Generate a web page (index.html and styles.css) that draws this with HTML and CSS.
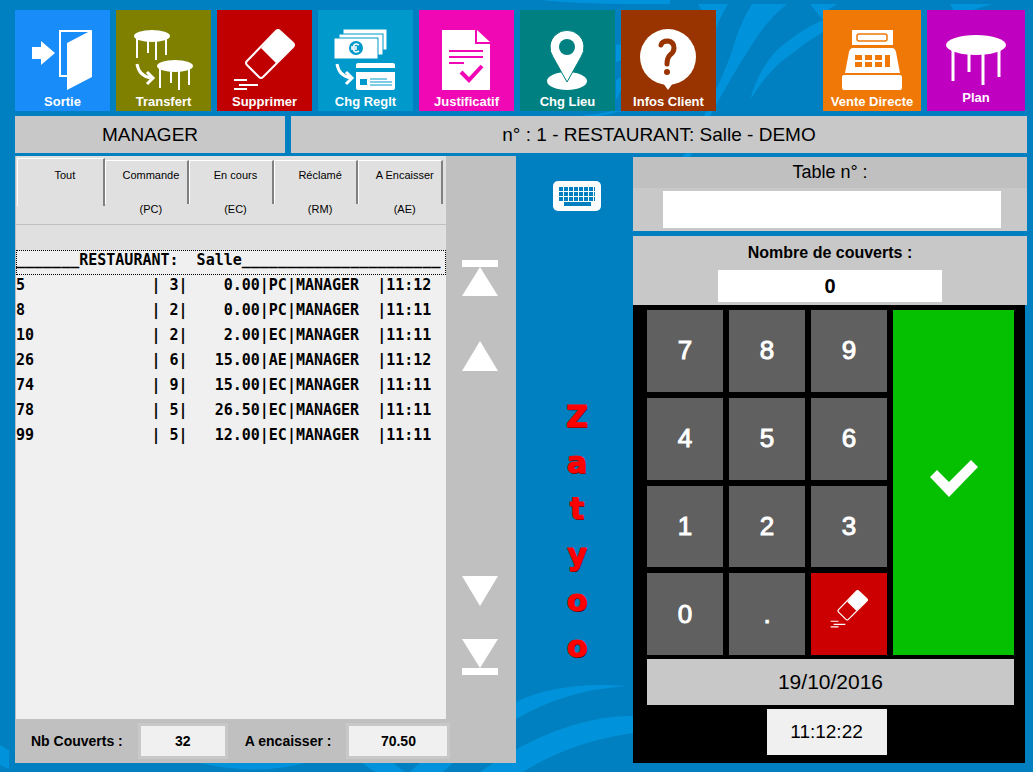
FILE: index.html
```
<!DOCTYPE html>
<html lang="fr">
<head>
    <meta charset="UTF-8">
    <meta name="viewport" content="width=device-width, initial-scale=1.0">
    <title>Zatyoo - Restaurant</title>
    <link rel="stylesheet" href="styles.css">
</head>
<body>

<!-- Background waves -->
<svg class="waves" viewBox="0 0 1033 772" preserveAspectRatio="none" aria-hidden="true">
    <path d="M540 0H670V4H630Q580 4 540 0ZM698 4H728Q718 20 712 40V30Z"/>
    <path d="M752 4H787Q767 20 753 43Q732 75 710 116H704Q716 92 716 90Q730 60 736 38Q742 20 752 4Z"/>
    <path d="M810 4H837L823 13V32Q806 42 790 55Q768 70 750 100Q758 70 777 50Q800 30 823 20Z"/>
    <path d="M950 4H992L960 14H956ZM616 45L621 44V60L616 62ZM616 80L621 77V90L616 100ZM580 116Q600 114 612 111H621L600 116Z"/>
    <path d="M686 153H692L690 157H682ZM0 745L9 750V769L0 765ZM200 763H305Q255 776 200 763ZM362 763H393L405 772H375Z"/>
    <path d="M410 772L420 763H453L443 772ZM480 772Q560 716 633 716V733Q570 742 523 772Z"/>
    <path d="M516 702Q560 681 627 686Q565 690 516 719Z"/>
</svg>

<div class="app">
    <!-- Main toolbar -->
    <nav class="toolbar">
        <button class="tile sortie">
            <svg viewBox="0 0 95 82"><path d="M17 37h9v-6l14 12-14 12v-6h-9zM52 33l25-13v47L52 80z" fill="#fff"/><path d="M52 66h-7V21h31" fill="none" stroke="#fff" stroke-width="2"/></svg>
            <span>Sortie</span>
        </button>
        <button class="tile transfert">
            <svg viewBox="0 0 95 82">
                <g id="table-small"><ellipse cx="36" cy="26" rx="18" ry="6" fill="#fff"/><path d="M21 28v20M32 31v12M40 31v19M50 28v17" stroke="#fff" stroke-width="2"/></g>
                <use href="#table-small" x="23" y="30"/>
                <path d="M21 54q2 12 14 14M31 62l6 6-6 6" fill="none" stroke="#fff" stroke-width="3"/>
            </svg>
            <span>Transfert</span>
        </button>
        <button class="tile supprimer">
            <svg viewBox="0 0 95 82">
                <g id="eraser"><path d="M44 38L59 21q2-2 4 0L76 33q2 2 0 4L59 53z" fill="#fff"/><path d="M59 21q2-2 4 0L76 33q2 2 0 4L46 67q-2 2-4 0L30 55q-2-2 0-4z" fill="none" stroke="#fff" stroke-width="2"/><path d="M17 70h13M22 75h19M17 79h13" stroke="#fff" stroke-width="2"/></g>
            </svg>
            <span>Supprimer</span>
        </button>
        <button class="tile reglt">
            <svg viewBox="0 0 95 82">
                <g fill="#fff" stroke="#0099cc" stroke-width="1"><rect x="25" y="19" width="44" height="21"/><rect x="21" y="24" width="44" height="21"/><rect x="16" y="28" width="44" height="21"/></g>
                <circle cx="38" cy="38" r="7" fill="#0099cc"/>
                <path d="M41 35q-5-3-6 3 1 6 6 3M33 37h6M33 39h6" fill="none" stroke="#fff" stroke-width="1.5"/>
                <path d="M19 54q2 12 14 14M28 62l6 6-6 6" fill="none" stroke="#fff" stroke-width="3"/>
                <path d="M38 58v-3q0-2 2-2h35q2 0 2 2v3zM38 62h39v16q0 2-2 2H40q-2 0-2-2z" fill="#fff"/>
                <path d="M42 69h7v6h-7z" fill="#0099cc"/><path d="M52 69h17M52 72h22M52 75h22" stroke="#0099cc"/>
            </svg>
            <span>Chg Reglt</span>
        </button>
        <button class="tile justificatif">
            <svg viewBox="0 0 95 82"><path d="M23 20h33v14h15v46H23zM58 20l13 12H58z" fill="#fff"/><path d="M30 41h34M30 47h34M30 53h15" stroke="#f008b4" stroke-width="2"/><path d="M42 62l8 8 13-14" fill="none" stroke="#f008b4" stroke-width="4"/></svg>
            <span>Justificatif</span>
        </button>
        <button class="tile lieu">
            <svg viewBox="0 0 95 82"><ellipse cx="47" cy="71" rx="20" ry="9" fill="#fff"/><path d="M47 72L33 47a17 17 0 1 1 28 0z" fill="#fff" stroke="#008080"/><circle cx="47" cy="37" r="8" fill="#008080"/></svg>
            <span>Chg Lieu</span>
        </button>
        <button class="tile infos">
            <svg viewBox="0 0 95 82"><circle cx="47" cy="47" r="28" fill="#fff"/><path d="M42 73h10l-5 7z" fill="#fff"/><path d="M40 35q1-4 7-4 6 1 6 7 0 4-4 7-3 3-3 9" fill="none" stroke="#993300" stroke-width="5" stroke-linecap="round"/><circle cx="46" cy="62" r="3" fill="#993300"/></svg>
            <span>Infos Client</span>
        </button>
        <button class="tile vente">
            <svg viewBox="0 0 98 82">
                <path d="M29 20h41v15H29zM30 38h39q3 0 4 4l4 21H22l4-21q1-4 4-4z" fill="#fff"/><rect x="19" y="65" width="60" height="15" rx="2" fill="#fff"/>
                <rect x="34" y="24" width="30" height="7" rx="2" fill="none" stroke="#f07806" stroke-width="1.5"/>
                <path d="M32 45h7v5h-7zM42 45h7v5h-7zM52 45h7v5h-7zM32 52h7v5h-7zM42 52h7v5h-7zM52 52h7v5h-7zM62 45h5v12h-5z" fill="#f07806"/>
            </svg>
            <span>Vente Directe</span>
        </button>
        <button class="tile plan">
            <svg viewBox="0 0 98 82"><ellipse cx="49" cy="35" rx="30" ry="10" fill="#fff"/><path d="M26 40v31M42 44v18M56 44v31M72 40v27" stroke="#fff" stroke-width="3"/></svg>
            <span>Plan</span>
        </button>
    </nav>

    <header class="titles">
        <div class="title-box">MANAGER</div>
        <div class="title-box">n° : 1 - RESTAURANT: Salle - DEMO</div>
    </header>

    <main class="main">
        <!-- Orders list -->
        <section class="orders">
            <div class="tabs">
                <button class="tab active">Tout</button>
                <button class="tab">Commande<span>(PC)</span></button>
                <button class="tab">En cours<span>(EC)</span></button>
                <button class="tab">Réclamé<span>(RM)</span></button>
                <button class="tab">A Encaisser<span>(AE)</span></button>
            </div>
            <div class="list">
                <table>
                    <colgroup>
                        <col class="num">
                        <col class="guests">
                        <col class="amount">
                        <col class="state">
                        <col class="user">
                        <col>
                    </colgroup>
                    <thead>
                        <tr><th colspan="6">_______RESTAURANT:  Salle______________________</th></tr>
                    </thead>
                    <tbody>
                        <tr><td>5</td><td>| 3|</td><td>0.00</td><td>|PC|</td><td>MANAGER</td><td>|11:12</td></tr>
                        <tr><td>8</td><td>| 2|</td><td>0.00</td><td>|PC|</td><td>MANAGER</td><td>|11:11</td></tr>
                        <tr><td>10</td><td>| 2|</td><td>2.00</td><td>|EC|</td><td>MANAGER</td><td>|11:11</td></tr>
                        <tr><td>26</td><td>| 6|</td><td>15.00</td><td>|AE|</td><td>MANAGER</td><td>|11:12</td></tr>
                        <tr><td>74</td><td>| 9|</td><td>15.00</td><td>|EC|</td><td>MANAGER</td><td>|11:11</td></tr>
                        <tr><td>78</td><td>| 5|</td><td>26.50</td><td>|EC|</td><td>MANAGER</td><td>|11:11</td></tr>
                        <tr><td>99</td><td>| 5|</td><td>12.00</td><td>|EC|</td><td>MANAGER</td><td>|11:11</td></tr>
                    </tbody>
                </table>
            </div>
            <div class="scroll">
                <button aria-label="Début"><svg width="36" height="36"><path d="M0 0h36v7H0zM18 7l18 29H0z" fill="#fff"/></svg></button>
                <button aria-label="Monter"><svg width="36" height="30"><path d="M18 0l18 30H0z" fill="#fff"/></svg></button>
                <button class="down" aria-label="Descendre"><svg width="36" height="30"><path d="M0 0h36L18 30z" fill="#fff"/></svg></button>
                <button aria-label="Fin"><svg width="36" height="36"><path d="M0 0h36L18 29zM0 29h36v7H0z" fill="#fff"/></svg></button>
            </div>
            <div class="totals">
                <label for="covers">Nb Couverts :</label>
                <input id="covers" value="32" readonly>
                <label for="due">A encaisser :</label>
                <input id="due" class="due" value="70.50" readonly>
            </div>
        </section>

        <!-- Keyboard and brand -->
        <aside class="middle">
            <button class="keyboard" aria-label="Clavier">
                <svg width="48" height="30" viewBox="0 0 48 30"><rect width="48" height="30" rx="5" fill="#fff"/><path d="M6 8h36M6 13h36M6 18h36" stroke="#0080c0" stroke-width="4" stroke-dasharray="4 1"/><path d="M11 23h27" stroke="#0080c0" stroke-width="4"/></svg>
            </button>
            <div class="brand"><span>Z</span><span>a</span><span>t</span><span>y</span><span>o</span><span>o</span></div>
        </aside>

        <!-- Table number and keypad -->
        <section class="entry">
            <div class="table-box">
                <label for="tableNo">Table n° :</label>
                <input id="tableNo" type="text">
            </div>
            <div class="guests-box">
                <label for="guests">Nombre de couverts :</label>
                <input id="guests" type="text" value="0">
            </div>
            <div class="pad">
                <div class="keys">
                    <button>7</button>
                    <button>8</button>
                    <button>9</button>
                    <button class="ok" aria-label="Valider"><svg width="48" height="37" viewBox="0 0 48 37"><path d="M0 17l7-7 12 12L41 0l7 7-29 30z" fill="#fff"/></svg></button>
                    <button>4</button>
                    <button>5</button>
                    <button>6</button>
                    <button>1</button>
                    <button>2</button>
                    <button>3</button>
                    <button>0</button>
                    <button>.</button>
                    <button class="clear" aria-label="Effacer"><svg width="38" height="38" viewBox="16 19 62 62"><use href="#eraser"/></svg></button>
                </div>
                <div class="date">19/10/2016</div>
                <div class="time">11:12:22</div>
            </div>
        </section>
    </main>
</div>

</body>
</html>
```
FILE: styles.css
```
* {
    box-sizing: border-box;
}
body {
    margin: 0;
    background-color: #0080c0;
    color: #000;
    font-family: "Liberation Sans", Arial, sans-serif;
}
button {
    margin: 0;
    padding: 0;
    border: none;
    background: none;
    color: inherit;
    font-family: inherit;
    cursor: pointer;
}
input {
    border: none;
    border-radius: 0;
    padding: 0;
    font-family: inherit;
    text-align: center;
}
svg {
    display: block;
}
.waves {
    position: absolute;
    top: 0;
    left: 0;
    width: 100%;
    height: 100%;
    fill: #0093db;
}
.app {
    position: relative;
    display: flex;
    flex-direction: column;
    min-height: 100vh;
    padding: 10px 6px 9px 15px;
}

/* Toolbar */
.toolbar {
    display: flex;
    gap: 6px;
    padding-right: 2px;
}
.tile {
    display: flex;
    flex-direction: column;
    flex: 0 0 95px;
    height: 101px;
    color: #fff;
    font-size: 13px;
    font-weight: bold;
    line-height: 19px;
}
.tile svg {
    flex: none;
    width: 100%;
    height: 82px;
}
.tile span {
    width: 100%;
    text-align: center;
}
.sortie { background-color: #188cf8; }
.transfert { background-color: #808000; }
.supprimer { background-color: #c00000; }
.reglt { background-color: #0099cc; }
.justificatif { background-color: #f008b4; }
.lieu { background-color: #008080; }
.infos { background-color: #993300; }
.vente {
    flex-basis: 98px;
    margin-left: auto;
    background-color: #f07806;
}
.plan {
    flex-basis: 98px;
    background-color: #c000c0;
}
.plan span {
    margin-top: -4px;
}

/* Title bar */
.titles {
    display: grid;
    grid-template-columns: 270fr 736fr;
    gap: 6px;
    margin: 5px 0 3px;
}
.title-box {
    background-color: #c8c8c8;
    font-size: 19px;
    line-height: 37px;
    text-align: center;
}

.main {
    display: grid;
    grid-template-columns: 501fr 117fr 394fr;
    flex: 1;
}

/* Orders */
.orders {
    display: grid;
    grid-template-columns: 1fr 70px;
    grid-template-rows: auto 1fr 44px;
    padding-left: 1px;
    background-color: #c0c0c0;
}
.tabs {
    display: grid;
    grid-template-columns: 88fr repeat(4, 85fr);
    height: 94px;
    padding: 2px 3px 0 1px;
    background: linear-gradient(#c0c0c0, #c0c0c0) 0 68px / 100% 1px no-repeat #e0e0e0;
}
.tab {
    position: relative;
    display: flex;
    flex-direction: column;
    height: 60px;
    padding: 8px 0 0 8px;
    font-size: 11px;
    line-height: 18px;
    text-align: center;
}
.tab span {
    margin-top: 16px;
}
.tab::before {
    content: "";
    position: absolute;
    top: 2px;
    left: 0;
    right: 0;
    height: 43px;
    border: 1px solid #fff;
    border-right: 2px solid #808080;
    border-bottom: none;
}
.tab.active::before {
    top: 0;
    height: 47px;
}
.list {
    overflow: hidden;
    background-color: #f0f0f0;
}
.list table {
    width: 100%;
    border-collapse: collapse;
    table-layout: fixed;
    font-family: "DejaVu Sans Mono", Consolas, monospace;
    font-size: 15px;
    font-weight: bold;
    line-height: 20px;
    white-space: pre;
}
.list th {
    padding: 0;
    outline: 1px dotted #000;
    outline-offset: -1px;
    text-align: left;
}
.list tr {
    height: 25px;
    vertical-align: top;
}
.list td {
    padding: 0;
}
.list td:nth-child(3) {
    text-align: right;
}
.num {
    width: 15ch;
}
.guests,
.state {
    width: 4ch;
}
.amount {
    width: 8ch;
}
.user {
    width: 9ch;
}
.scroll {
    display: flex;
    flex-direction: column;
    align-items: center;
    grid-column: 2;
    grid-row: 1 / 3;
    gap: 45px;
    padding: 104px 2px 44px 0;
}
.scroll .down {
    margin-top: auto;
    margin-bottom: -12px;
}
.totals {
    display: flex;
    align-items: center;
    grid-column: 1 / 3;
    padding-left: 15px;
    font-size: 14px;
    font-weight: bold;
}
.totals input {
    width: 90px;
    height: 36px;
    margin: 0 17px 0 15px;
    border: 3px solid #c8c8c8;
    background-color: #f0f0f0;
    font-size: 14px;
    font-weight: bold;
}
.totals .due {
    width: 104px;
}

/* Keyboard and brand */
.middle {
    display: flex;
    flex-direction: column;
    align-items: center;
    padding: 25px 0 0 5px;
}
.brand {
    display: flex;
    flex-direction: column;
    margin-top: 183px;
    color: #f00;
    font-family: "DejaVu Sans", Verdana, sans-serif;
    font-size: 30px;
    font-weight: bold;
    line-height: 46px;
    text-align: center;
    text-shadow: 1px 1px 0 #300;
    -webkit-text-stroke: 1px #f00;
}

/* Entry */
.entry {
    display: flex;
    flex-direction: column;
    padding-top: 1px;
}
.table-box,
.guests-box {
    display: flex;
    flex-direction: column;
    align-items: center;
    background-color: #c8c8c8;
}
.table-box {
    margin-bottom: 5px;
    padding-bottom: 3px;
}
.table-box label {
    width: 100%;
    margin-bottom: 3px;
    background-color: #c0c0c0;
    font-size: 18px;
    line-height: 31px;
    text-align: center;
}
.table-box input {
    width: 86%;
    height: 37px;
    margin-left: 4px;
    font-size: 18px;
}
.guests-box label {
    font-size: 16px;
    font-weight: bold;
    line-height: 34px;
}
.guests-box input {
    width: 57%;
    height: 32px;
    margin-bottom: 3px;
    font-size: 20px;
    font-weight: bold;
}
.pad {
    display: flex;
    flex-direction: column;
    flex: 1;
    margin-right: 2px;
    padding: 5px 11px 8px 14px;
    background-color: #000;
}
.keys {
    display: grid;
    grid-template-columns: 76fr 76fr 76fr 121fr;
    grid-auto-rows: 1fr;
    flex: 1;
    gap: 6px;
}
.keys button {
    display: flex;
    align-items: center;
    justify-content: center;
    background-color: #606060;
    color: #fff;
    font-size: 26px;
    -webkit-text-stroke: 1px #fff;
}
.keys .ok {
    grid-column: 4;
    grid-row: 1 / 5;
    padding-bottom: 8px;
    background-color: #04c000;
}
.keys .clear {
    padding-bottom: 10px;
    background-color: #cc0000;
}
.date {
    margin: 4px 0;
    background-color: #c8c8c8;
    font-size: 21px;
    line-height: 46px;
    text-align: center;
}
.time {
    align-self: center;
    width: 120px;
    margin-right: 8px;
    background-color: #f0f0f0;
    font-size: 19px;
    line-height: 46px;
    text-align: center;
}
```
